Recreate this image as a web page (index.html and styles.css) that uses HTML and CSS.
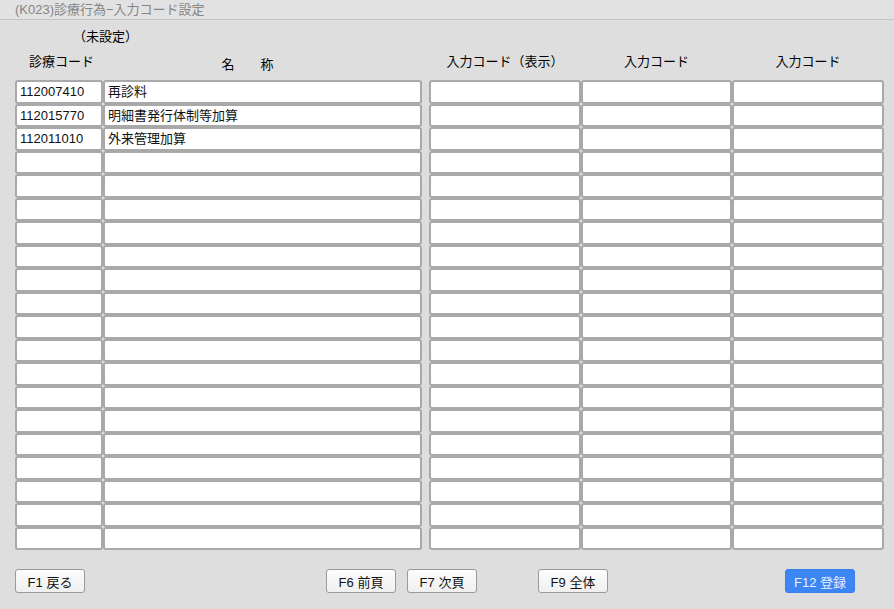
FILE: index.html
```html
<!DOCTYPE html>
<html>
<head>
    <meta charset="utf-8">
    <title>(K023)診療行為−入力コード設定</title>
    <link rel="stylesheet" href="styles.css">
</head>
<body>
    <div class="titlebar">(K023)診療行為−入力コード設定</div>

    <div class="main">
        <div class="status">（未設定）</div>

        <div class="sheet">
            <div class="head h-code">診療コード</div>
            <div class="head h-name">名　　称</div>
            <div class="gap"></div>
            <div class="head">入力コード（表示）</div>
            <div class="head">入力コード</div>
            <div class="head">入力コード</div>
        </div>

        <div class="sheet rows" id="rows"></div>

        <div class="footer">
            <button class="fkey">F1 戻る</button>
            <div class="spacer-a"></div>
            <button class="fkey">F6 前頁</button>
            <button class="fkey">F7 次頁</button>
            <div class="spacer-b"></div>
            <button class="fkey">F9 全体</button>
            <div class="spacer-c"></div>
            <button class="fkey primary">F12 登録</button>
        </div>
    </div>

    <script>
        const data = [
            ['112007410', '再診料'],
            ['112015770', '明細書発行体制等加算'],
            ['112011010', '外来管理加算']
        ];
        const rows = document.getElementById('rows');
        for (let i = 0; i < 20; i++) {
            const d = data[i] || ['', ''];
            rows.insertAdjacentHTML('beforeend',
                '<div class="cell">' + d[0] + '</div>' +
                '<div class="cell">' + d[1] + '</div>' +
                '<div class="gap"></div>' +
                '<div class="cell"></div><div class="cell"></div><div class="cell"></div>');
        }
    </script>
</body>
</html>
```

FILE: styles.css
```css
body {
    margin: 0;
    background: #dedede;
    font-family: "Liberation Sans", "Noto Sans CJK JP", sans-serif;
    color: #111;
    height: 609px;
    overflow: hidden;
}

.titlebar {
    height: 20px;
    line-height: 19px;
    padding-left: 15px;
    font-size: 13px;
    color: #858585;
    background: #e2e2e2;
    border-bottom: 1px solid #c4c4c4;
    box-sizing: border-box;
}

.main {
    padding: 0 10px 0 15px;
}

.status {
    margin-top: 8px;
    padding-left: 58px;
    font-size: 13px;
    height: 17px;
    line-height: 17px;
    color: #000;
}

.sheet {
    display: grid;
    grid-template-columns: 88px 319px 7px 152px 151px 152px;
}

.head {
    font-size: 13px;
    color: #000;
    text-align: center;
    height: 35px;
    line-height: 17px;
    padding-top: 8px;
    box-sizing: border-box;
}

.h-code {
    text-align: left;
    padding-left: 14px;
}

.h-name {
    padding-top: 11px;
    padding-right: 30px;
}

.rows {
    grid-auto-rows: 23.5px;
}

.cell {
    background: #fff;
    border: 2px solid #a9a9a9;
    border-radius: 3px;
    font-size: 13px;
    line-height: 19px;
    padding-left: 3px;
    box-sizing: border-box;
    white-space: nowrap;
    overflow: hidden;
}

.footer {
    display: flex;
    align-items: center;
    margin-top: 19px;
}

.fkey {
    height: 24px;
    width: 70px;
    padding: 0;
    font-family: "Liberation Sans", "Noto Sans CJK JP", sans-serif;
    font-size: 13px;
    color: #111;
    background: linear-gradient(#fcfcfc, #f0f0f0);
    border: 1px solid #9a9a9a;
    border-radius: 3px;
    margin-right: 11px;
}

.fkey.primary {
    background: #3c86f4;
    border-color: #3a7ee8;
    color: #e8f0ff;
}

.spacer-a { width: 230px; }
.spacer-b { width: 50px; }
.spacer-c { width: 166px; }
```
